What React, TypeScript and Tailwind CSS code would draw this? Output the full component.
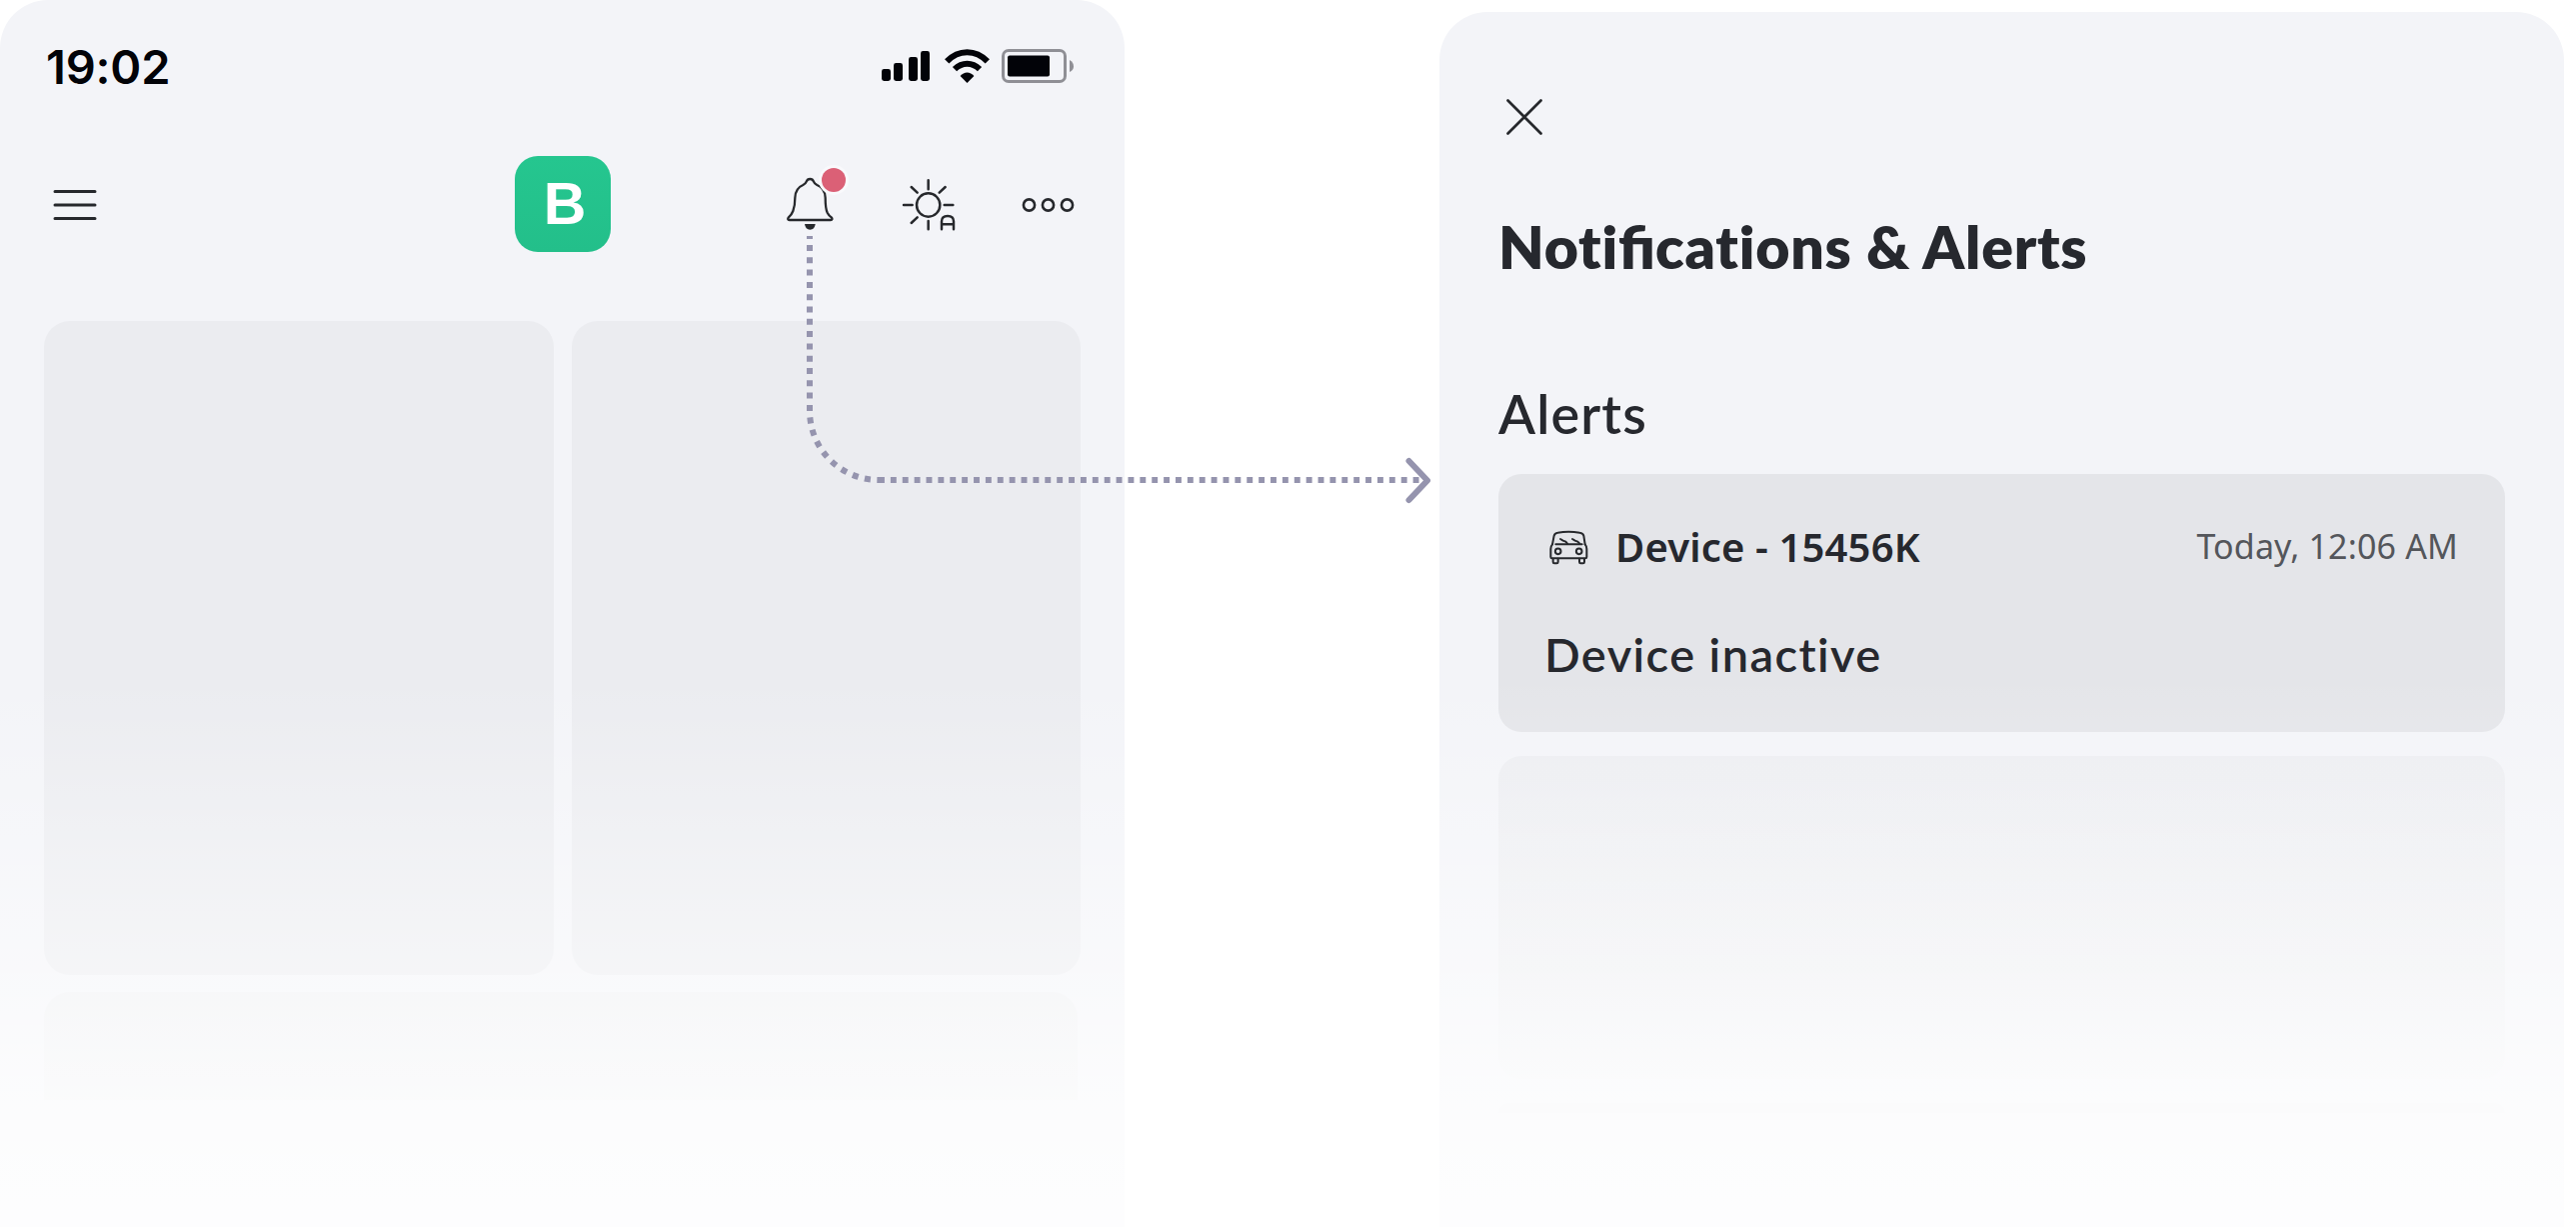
const INK = '#26282c';

function SignalIcon() {
  return (
    <svg className="h-[34px] w-[48px]" viewBox="0 0 48 34" fill="#020308">
      <rect x="0" y="20" width="9" height="12" rx="2.4" />
      <rect x="12" y="14" width="9" height="18" rx="2.4" />
      <rect x="27" y="8" width="9" height="24" rx="2.4" />
      <rect x="39" y="2" width="9" height="30" rx="2.4" />
    </svg>
  );
}

function WifiIcon() {
  return (
    <svg className="ml-[15px] h-[34px] w-[45px]" viewBox="0 0 45 34">
      <g fill="none" stroke="#020308" strokeWidth="6">
        <path d="M2.2 12.4 Q11 3.2 22.5 3.2 Q34 3.2 42.8 12.4" />
        <path d="M10 20.2 Q15.6 14.8 22.5 14.8 Q29.4 14.8 35 20.2" />
      </g>
      <path fill="#020308" d="M15.6 27 Q18.6 23.4 22.5 23.4 Q26.4 23.4 29.4 27 L22.5 34Z" />
    </svg>
  );
}

function BatteryIcon() {
  return (
    <svg className="ml-3 h-[34px] w-[73px]" viewBox="0 0 73 34">
      <rect x="1.5" y="1.5" width="62" height="31" rx="5.5" fill="none" stroke="#8f8f95" strokeWidth="3" />
      <rect x="6" y="6.5" width="42" height="21" rx="2" fill="#020308" />
      <path d="M68 11 Q72 13 72 17.5 Q72 21 68 23Z" fill="#8f8f95" />
    </svg>
  );
}

function MenuIcon() {
  return (
    <svg className="mt-[2px] h-[32px] w-[44px]" viewBox="0 0 44 32" stroke={INK} strokeWidth="3" strokeLinecap="round">
      <path d="M2 2.5H42M2 16H42M2 29.5H42" />
    </svg>
  );
}

function BellIcon() {
  return (
    <svg className="h-20 w-[72px]" viewBox="0 0 216 240">
      <path
        d="M80 50Q83 42 91 42Q99 42 102 50Q104 56 112 60Q136 70 137 98Q137 130 143 143Q147 151 156 158Q160 165 153 165H29Q22 165 26 158Q36 149 40 138Q46 122 46 98Q47 70 70 60Q78 56 80 50Z"
        fill="none"
        stroke={INK}
        strokeWidth="6.8"
        strokeLinejoin="round"
      />
      <path d="M75 177H107Q105 194 91 194Q77 194 75 177Z" fill={INK} />
      <circle cx="162" cy="45" r="45" fill="#f9f9fc" />
      <circle cx="162" cy="45" r="36" fill="#db6076" />
    </svg>
  );
}

function AutoThemeIcon() {
  return (
    <svg className="ml-12 h-20 w-[60px]" viewBox="360 0 180 240" fill="none" stroke={INK} strokeWidth="7.4" strokeLinecap="round">
      <circle cx="446" cy="120" r="35" />
      <path d="M446 46V73M446 168V193M372 120H398M494 120H520M395 66L413 83M497 66L479 83M395 174L413 157" />
      <path d="M486 193V169Q486 153 504 153Q522 153 522 169V193M486 178H522" />
    </svg>
  );
}

function MoreIcon() {
  return (
    <svg className="ml-[60px] h-20 w-[56px]" viewBox="0 0 56 80" fill="none" stroke={INK} strokeWidth="2.6">
      <circle cx="9.500" cy="40" r="5.600" />
      <circle cx="28.500" cy="40" r="5.600" />
      <circle cx="47.500" cy="40" r="5.600" />
    </svg>
  );
}

function CloseIcon() {
  return (
    <svg className="h-9 w-9" viewBox="0 0 36 36" stroke={INK} strokeWidth="2.7" strokeLinecap="round">
      <path d="M1.500 1.500L34.500 34.500M34.500 1.500L1.500 34.500" />
    </svg>
  );
}

function CarIcon() {
  return (
    <svg className="h-[36px] w-[40px]" viewBox="42 42 120 108" fill="none" stroke={INK} strokeWidth="6" strokeLinecap="round" strokeLinejoin="round">
      <path d="M54 88L59 62Q61 54 70 53Q102 48 136 53Q146 54 148 62L152 88" />
      <path d="M64 88H143M54 88Q49 93 49 102V126Q49 130 53 130H153Q157 130 157 126V102Q157 93 152 88" />
      <path d="M78 72L86 77L94 80L99 86M114 72L122 77L130 80L136 86" />
      <circle cx="71" cy="109" r="8.500" />
      <circle cx="134" cy="109" r="8.500" />
      <path d="M56 131V141Q56 145 60 145H67Q71 145 71 141V131M135 131V141Q135 145 139 145H146Q150 145 150 141V131" />
    </svg>
  );
}

function Connector() {
  return (
    <svg
      className="pointer-events-none absolute left-[800px] top-[230px] z-20 h-[280px] w-[640px]"
      viewBox="800 230 640 280"
      fill="none"
      stroke="#9594ae"
      strokeWidth="6"
    >
      <path d="M810 236V239" />
      <path d="M810 245V412" strokeDasharray="6 6.300" />
      <path d="M810 411A69 69 0 0 0 879 480" strokeDasharray="6 6.500" strokeDashoffset="-6.500" />
      <path d="M879 480H1420" strokeDasharray="5.900 5.980" />
      <path d="M1409.500 461L1428 480.500L1409.500 500" strokeLinecap="round" strokeLinejoin="round" />
    </svg>
  );
}

function Fade() {
  return (
    <div className="pointer-events-none absolute inset-x-0 bottom-0 z-10 h-[587px] bg-[linear-gradient(to_bottom,rgba(255,255,255,0)_6%,rgba(255,255,255,0.5)_57%,rgba(255,255,255,0.74)_80%,rgba(255,255,255,0.86)_100%)]" />
  );
}

function HomeScreen() {
  return (
    <section className="relative h-[1227px] w-[1125px] overflow-hidden rounded-t-[48px] bg-[#f3f4f8]">
      <div className="flex h-[132px] items-center justify-between pl-[46px] pr-[50px]">
        <span className="font-['Inter',sans-serif] text-[47px] font-semibold leading-[57px] tracking-[-0.2px] text-[#020308]">
          19:02
        </span>
        <div className="flex items-center">
          <SignalIcon />
          <WifiIcon />
          <BatteryIcon />
        </div>
      </div>

      <header className="mt-6 flex h-24 items-center pl-[53px]">
        <MenuIcon />
        <div className="ml-[418px] flex h-24 w-24 items-center justify-center rounded-[23px] bg-[linear-gradient(to_bottom,#25c68f,#23bf8a)] pl-[4px]">
          <span className="font-['Liberation_Sans',Arial,sans-serif] text-[59px] font-bold leading-[66px] text-white">B</span>
        </div>
        <div className="ml-[169px] mt-[2px] flex items-center">
          <BellIcon />
          <AutoThemeIcon />
          <MoreIcon />
        </div>
      </header>

      <div className="mt-[69px] grid grid-cols-2 gap-x-[18px] px-11">
        <div className="h-[654px] rounded-[26px] bg-[#ebecf0]" />
        <div className="h-[654px] rounded-[26px] bg-[#ebecf0]" />
      </div>
      <div className="ml-11 mt-[17px] h-[108px] w-[1034px] rounded-t-[26px] bg-[linear-gradient(to_bottom,#eeeff2,#eff0f2)]" />
      <Fade />
    </section>
  );
}

function AlertCard() {
  return (
    <article className="mt-[29px] h-[258px] rounded-[23px] bg-[#e4e5e9] pl-[46px] pr-[47px] pt-[45px]">
      <div className="flex h-14 items-center">
        <span className="ml-1">
          <CarIcon />
        </span>
        <h3 className="ml-[27px] font-['Noto_Sans',sans-serif] text-[40px] font-semibold leading-[56px] tracking-[0.15px]">
          Device - 15456K
        </h3>
        <time className="ml-auto mt-[-3px] font-['Noto_Sans',sans-serif] text-[34px] leading-[48px] tracking-[0.15px] text-[#54565b]">
          Today, 12:06 AM
        </time>
      </div>
      <p className="mt-[51px] font-['Lato',sans-serif] text-[47px] font-semibold leading-[56px] tracking-[1.4px]">Device inactive</p>
    </article>
  );
}

function NotificationsScreen() {
  return (
    <section className="relative mt-3 h-[1215px] w-[1125px] overflow-hidden rounded-t-[48px] bg-[#f3f4f8] px-[59px] pt-[87px] text-[#26282e]">
      <div className="ml-2">
        <CloseIcon />
      </div>
      <h1 className="mt-[77px] font-['Lato',sans-serif] text-[59px] font-extrabold leading-[70px] tracking-[0.75px]">
        Noti<span className="tracking-normal">fi</span>cations &amp; Alerts
      </h1>
      <h2 className="mt-[100px] font-['Lato',sans-serif] text-[54px] font-semibold leading-[63px] tracking-[1.15px]">Alerts</h2>
      <AlertCard />
      <div className="mt-6 h-[323px] rounded-[23px] bg-[linear-gradient(to_bottom,#ecedf1,#eeeff2_70%,#f1f2f5)]" />
      <div className="mt-6 h-[10px] rounded-t-[23px] bg-[#f0f1f4]" />
      <Fade />
    </section>
  );
}

export default function App() {
  return (
    <main className="relative flex h-[1227px] w-[2577px] gap-[315px] overflow-hidden bg-white">
      <HomeScreen />
      <NotificationsScreen />
      <Connector />
    </main>
  );
}
